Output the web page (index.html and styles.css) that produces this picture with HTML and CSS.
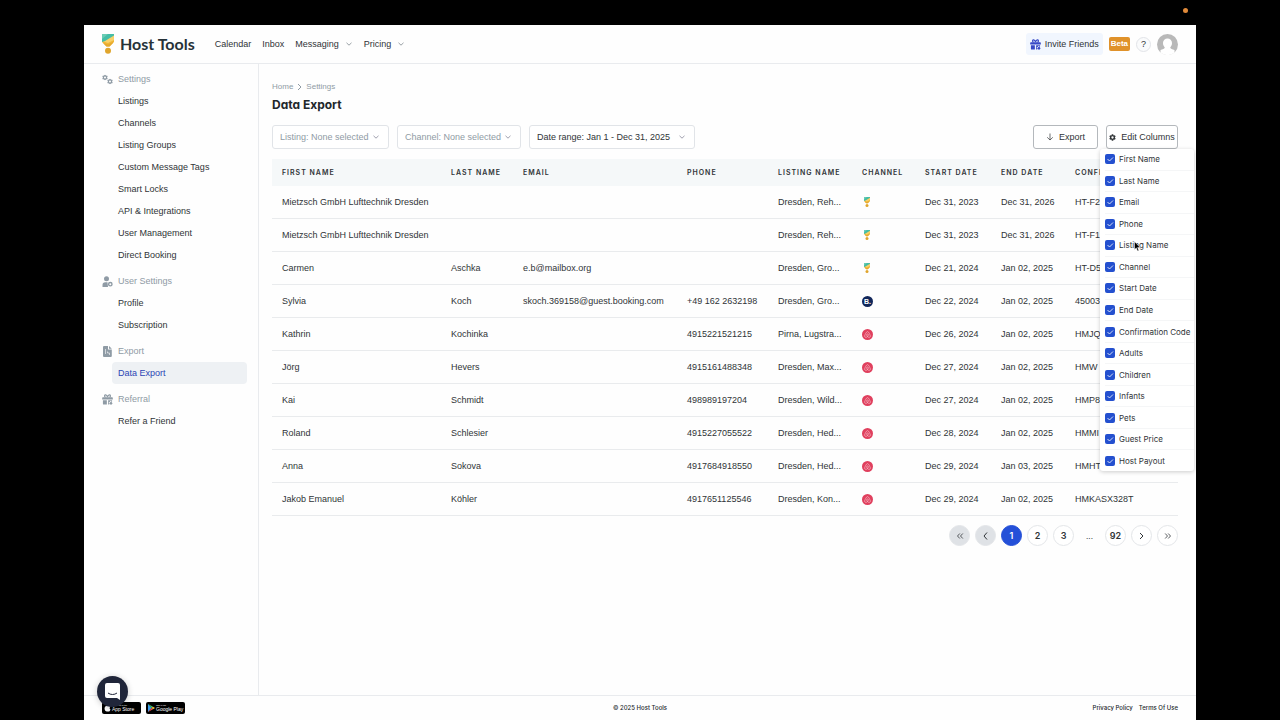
FILE: index.html
```html
<!DOCTYPE html>
<html lang="en">

<head>
    <meta charset="UTF-8">
    <title>Data Export - Host Tools</title>
    <link rel="stylesheet" href="styles.css">
</head>

<body>
    <svg class="sprite" aria-hidden="true">
        <symbol id="logo" viewBox="0 0 12 20">
            <path d="M0 0h12v8L7.500 12.500h-3L0 8z" fill="#f0b636"/>
            <path d="M12 1v5L6 9 0 7z" fill="#f8d06a"/>
            <path d="M0 0h12v1.500L3 7 0 8z" fill="#45bda6"/>
            <path d="M0 0h6L0 5z" fill="#6accb4"/>
            <path d="M1 9l5 1.500L11 8v1L7.500 12.500h-3z" fill="#e5a92f"/>
            <circle cx="6" cy="16.800" r="3" fill="#e0a52c"/>
        </symbol>
        <symbol id="down" viewBox="0 0 8 8">
            <path d="M1.500 2.800L4 5.200l2.500-2.400" fill="none" stroke="#7d868d" stroke-width=".8"/>
        </symbol>
        <symbol id="gear" viewBox="0 0 24 24">
            <path fill="currentColor" fill-rule="evenodd" d="M9.500 1h5l.7 3.200 2 1.200L20.300 4.400l2.500 4.300-2.400 2.200v2.200l2.400 2.200-2.500 4.300-3.100-1-2 1.200-.7 3.200h-5l-.7-3.200-2-1.200-3.100 1-2.500-4.300 2.400-2.200v-2.200L1.200 8.700l2.500-4.300 3.100 1 2-1.200zM12 8a4 4 0 1 0 0 8 4 4 0 0 0 0-8z"/>
        </symbol>
        <symbol id="gift" viewBox="0 0 12 12">
            <path fill="currentColor" d="M1 3.500h10a.8.8 0 0 1 .8.800v1.700H.2V4.300A.8.800 0 0 1 1 3.500zM1 6.800h4.300v4.700H2a1 1 0 0 1-1-1zM6.700 6.800H11v1.400l-1 .2-.8-1-.8 1.200-1.200.2.900 1-.2 1.700H6.700z"/>
            <circle cx="9.800" cy="10.200" r="1.400" fill="currentColor"/>
            <path d="M6 3.500C5.500 1.500 4.500.8 3.600 1c-1.200.3-1 2.200.4 2.500M6 3.500C6.500 1.500 7.500.8 8.400 1c1.200.3 1 2.200-.4 2.500" fill="none" stroke="currentColor" stroke-width="1.300"/>
        </symbol>
        <symbol id="airbnb" viewBox="0 0 10 10">
            <circle cx="5" cy="5" r="5" fill="#e0405e"/>
            <path d="M5 6.900C4 5.800 3.900 4.500 5 4.500s1 1.300 0 2.400zM5 6.900c-1 1.200-2.900.8-2.600-.6C2.700 5.200 4 2.300 5 2.300s2.300 2.900 2.600 4c.3 1.400-1.600 1.800-2.600.6z" fill="none" stroke="#fbd3da" stroke-width=".5"/>
        </symbol>
    </svg>
    <span class="rec-dot"></span>

    <div class="app">
        <header class="topbar">
            <a class="brand" href="#"><svg width="12" height="20"><use href="#logo"/></svg>Host Tools</a>
            <nav class="topnav">
                <a href="#">Calendar</a>
                <a href="#">Inbox</a>
                <a href="#">Messaging <svg width="8" height="8"><use href="#down"/></svg></a>
                <a href="#">Pricing <svg width="8" height="8"><use href="#down"/></svg></a>
            </nav>
            <div class="account">
                <a class="invite" href="#"><svg width="11" height="11"><use href="#gift"/></svg>Invite Friends</a>
                <span class="beta">Beta</span>
                <button class="help" aria-label="Help">?</button>
                <button class="avatar" aria-label="Account">
                    <svg width="21" height="21" viewBox="0 0 21 21">
                        <circle cx="10.500" cy="10.500" r="10.500" fill="#b9b9b9"/>
                        <path d="M10.500 4.500a4.500 4.500 0 0 1 4.500 4.500c0 2-.8 3.500-1.800 4.400 0 1.400 2.300 1.600 4.300 2.700v2.300a10.500 10.500 0 0 1-14 0v-2.300c2-1.100 4.300-1.300 4.300-2.700C6.800 12.500 6 11 6 9a4.500 4.500 0 0 1 4.500-4.500z" fill="#fff"/>
                    </svg>
                </button>
            </div>
        </header>

        <div class="layout">
            <aside class="sidebar">
                <h2>
                    <svg width="11" height="11" viewBox="0 0 22 22"><svg width="12" height="12" y="1"><use href="#gear"/></svg><svg width="12" height="12" x="10" y="9"><use href="#gear"/></svg></svg>
                    Settings
                </h2>
                <ul>
                    <li><a href="#">Listings</a></li>
                    <li><a href="#">Channels</a></li>
                    <li><a href="#">Listing Groups</a></li>
                    <li><a href="#">Custom Message Tags</a></li>
                    <li><a href="#">Smart Locks</a></li>
                    <li><a href="#">API &amp; Integrations</a></li>
                    <li><a href="#">User Management</a></li>
                    <li><a href="#">Direct Booking</a></li>
                </ul>
                <h2>
                    <svg width="11" height="11" viewBox="0 0 11 11"><circle cx="4.500" cy="2.800" r="2.500" fill="currentColor"/><path d="M.5 11V9a2.800 2.800 0 0 1 2.800-2.800h2.200L6 11z" fill="currentColor"/><circle cx="8.300" cy="8.200" r="1.700" fill="none" stroke="currentColor" stroke-width="1.400"/></svg>
                    User Settings
                </h2>
                <ul>
                    <li><a href="#">Profile</a></li>
                    <li><a href="#">Subscription</a></li>
                </ul>
                <h2>
                    <svg width="11" height="11" viewBox="0 0 11 11"><path d="M2 0h4v3.500h3.800V10a1 1 0 0 1-1 1H2a1 1 0 0 1-1-1V1a1 1 0 0 1 1-1zM7 0l2.800 2.800H7z" fill="currentColor"/><path d="M3.500 3v5M5.500 5.500v1.500h2V9" fill="none" stroke="#fff" stroke-width=".6"/></svg>
                    Export
                </h2>
                <ul>
                    <li><a class="active" href="#">Data Export</a></li>
                </ul>
                <h2><svg width="11" height="11"><use href="#gift"/></svg>Referral</h2>
                <ul>
                    <li><a href="#">Refer a Friend</a></li>
                </ul>
            </aside>

            <main>
                <nav class="crumbs">
                    <a href="#">Home</a>
                    <svg width="5" height="8" viewBox="0 0 5 8"><path d="M1 1l3 3-3 3" fill="none" stroke="currentColor"/></svg>
                    <a href="#">Settings</a>
                </nav>
                <h1>Data Export</h1>

                <div class="toolbar">
                    <select class="muted listing" aria-label="Listing"><option>Listing: None selected</option></select>
                    <select class="muted channel" aria-label="Channel"><option>Channel: None selected</option></select>
                    <select class="range" aria-label="Date range"><option>Date range: Jan 1 - Dec 31, 2025</option></select>
                    <button class="export">
                        <svg width="8" height="8" viewBox="0 0 8 8"><path d="M4 .5v6.500M1.200 4.300L4 7l2.800-2.700" fill="none" stroke="currentColor" stroke-width=".7"/></svg>
                        Export
                    </button>
                    <div class="columns">
                        <button><svg width="7" height="7"><use href="#gear"/></svg>Edit Columns</button>
                        <div class="menu">
                            <label><input type="checkbox" checked>First Name</label>
                            <label><input type="checkbox" checked>Last Name</label>
                            <label><input type="checkbox" checked>Email</label>
                            <label><input type="checkbox" checked>Phone</label>
                            <label><input type="checkbox" checked>Listing Name</label>
                            <label><input type="checkbox" checked>Channel</label>
                            <label><input type="checkbox" checked>Start Date</label>
                            <label><input type="checkbox" checked>End Date</label>
                            <label><input type="checkbox" checked>Confirmation Code</label>
                            <label><input type="checkbox" checked>Adults</label>
                            <label><input type="checkbox" checked>Children</label>
                            <label><input type="checkbox" checked>Infants</label>
                            <label><input type="checkbox" checked>Pets</label>
                            <label><input type="checkbox" checked>Guest Price</label>
                            <label><input type="checkbox" checked>Host Payout</label>
                        </div>
                    </div>
                </div>

                <table>
                    <colgroup>
                        <col class="w-first"><col class="w-last"><col class="w-email"><col class="w-phone"><col class="w-listing"><col class="w-channel"><col class="w-start"><col class="w-end"><col>
                    </colgroup>
                    <thead>
                        <tr><th>First Name</th><th>Last Name</th><th>Email</th><th>Phone</th><th>Listing Name</th><th>Channel</th><th>Start Date</th><th>End Date</th><th>Confi</th></tr>
                    </thead>
                    <tbody>
                        <tr><td>Mietzsch GmbH Lufttechnik Dresden</td><td></td><td></td><td></td><td>Dresden, Reh...</td><td><svg class="ht" width="6" height="10"><use href="#logo"/></svg></td><td>Dec 31, 2023</td><td>Dec 31, 2026</td><td>HT-F2</td></tr>
                        <tr><td>Mietzsch GmbH Lufttechnik Dresden</td><td></td><td></td><td></td><td>Dresden, Reh...</td><td><svg class="ht" width="6" height="10"><use href="#logo"/></svg></td><td>Dec 31, 2023</td><td>Dec 31, 2026</td><td>HT-F1</td></tr>
                        <tr><td>Carmen</td><td>Aschka</td><td>e.b@mailbox.org</td><td></td><td>Dresden, Gro...</td><td><svg class="ht" width="6" height="10"><use href="#logo"/></svg></td><td>Dec 21, 2024</td><td>Jan 02, 2025</td><td>HT-D5</td></tr>
                        <tr><td>Sylvia</td><td>Koch</td><td>skoch.369158@guest.booking.com</td><td>+49 162 2632198</td><td>Dresden, Gro...</td><td><span class="booking">B.</span></td><td>Dec 22, 2024</td><td>Jan 02, 2025</td><td>45003</td></tr>
                        <tr><td>Kathrin</td><td>Kochinka</td><td></td><td>4915221521215</td><td>Pirna, Lugstra...</td><td><svg width="11" height="11"><use href="#airbnb"/></svg></td><td>Dec 26, 2024</td><td>Jan 02, 2025</td><td>HMJQ</td></tr>
                        <tr><td>Jörg</td><td>Hevers</td><td></td><td>4915161488348</td><td>Dresden, Max...</td><td><svg width="11" height="11"><use href="#airbnb"/></svg></td><td>Dec 27, 2024</td><td>Jan 02, 2025</td><td>HMW</td></tr>
                        <tr><td>Kai</td><td>Schmidt</td><td></td><td>498989197204</td><td>Dresden, Wild...</td><td><svg width="11" height="11"><use href="#airbnb"/></svg></td><td>Dec 27, 2024</td><td>Jan 02, 2025</td><td>HMP8</td></tr>
                        <tr><td>Roland</td><td>Schlesier</td><td></td><td>4915227055522</td><td>Dresden, Hed...</td><td><svg width="11" height="11"><use href="#airbnb"/></svg></td><td>Dec 28, 2024</td><td>Jan 02, 2025</td><td>HMMI</td></tr>
                        <tr><td>Anna</td><td>Sokova</td><td></td><td>4917684918550</td><td>Dresden, Hed...</td><td><svg width="11" height="11"><use href="#airbnb"/></svg></td><td>Dec 29, 2024</td><td>Jan 03, 2025</td><td>HMHT</td></tr>
                        <tr><td>Jakob Emanuel</td><td>Köhler</td><td></td><td>4917651125546</td><td>Dresden, Kon...</td><td><svg width="11" height="11"><use href="#airbnb"/></svg></td><td>Dec 29, 2024</td><td>Jan 02, 2025</td><td>HMKASX328T</td></tr>
                    </tbody>
                </table>

                <nav class="pages" aria-label="Pages">
                    <button disabled aria-label="First"><svg width="8" height="8" viewBox="0 0 8 8"><path d="M3.800 1.500L1.500 4l2.300 2.500M6.800 1.500L4.500 4l2.300 2.500" fill="none" stroke="currentColor" stroke-width=".8"/></svg></button>
                    <button disabled aria-label="Previous"><svg width="5" height="8" viewBox="0 0 5 8"><path d="M4 .5L1 4l3 3.500" fill="none" stroke="currentColor"/></svg></button>
                    <button class="current">1</button>
                    <button>2</button>
                    <button>3</button>
                    <span>...</span>
                    <button>92</button>
                    <button aria-label="Next"><svg width="5" height="8" viewBox="0 0 5 8"><path d="M1 1l3 3-3 3" fill="none" stroke="currentColor"/></svg></button>
                    <button aria-label="Last"><svg width="8" height="8" viewBox="0 0 8 8"><path d="M1.200 1.500L3.500 4 1.200 6.500M4.200 1.500L6.500 4 4.200 6.500" fill="none" stroke="currentColor" stroke-width=".8"/></svg></button>
                </nav>
            </main>
        </div>

        <footer>
            <div class="stores">
                <a href="#">
                    <svg width="7" height="8" viewBox="0 0 7 9"><path d="M3.500 2.500C4.500 1.800 6 2 6.700 3c-1.200.8-1 2.500.2 3.200C6.300 8 5.300 9 3.600 8.300 2 9 .2 7.500.2 5c0-2.300 1.800-3.200 3.300-2.500zM3.500 2C3.500 1 4.200.2 5 0c.1 1-.6 1.900-1.500 2z" fill="#fff"/></svg>
                    <span><small>Download on the</small>App Store</span>
                </a>
                <a href="#">
                    <svg width="7" height="8" viewBox="0 0 7 8"><path d="M0 0v8l3.500-4z" fill="#3c9ef0"/><path d="M0 0l5 2.800L3.500 4z" fill="#3fc46f"/><path d="M5 2.800L7 4 5 5.200 3.500 4z" fill="#f8c73a"/><path d="M0 8l5-2.800L3.500 4z" fill="#e8504b"/></svg>
                    <span><small>GET IT ON</small>Google Play</span>
                </a>
            </div>
            <span>© 2025 Host Tools</span>
            <div class="legal"><a href="#">Privacy Policy</a><a href="#">Terms Of Use</a></div>
        </footer>
    </div>

    <button class="chat" aria-label="Open chat">
        <svg width="15" height="17" viewBox="0 0 15 17"><path d="M2 0h11a2 2 0 0 1 2 2v15l-3-2H2a2 2 0 0 1-2-2V2a2 2 0 0 1 2-2z" fill="#fff"/><path d="M3 10c2.500 2 6.500 2 9 0" fill="none" stroke="#20263a"/></svg>
    </button>
    <svg class="cursor" width="7" height="11" viewBox="0 0 7 11"><path d="M.5.5v8l1.800-1.600L3.500 10l1.400-.6-1.300-2.900h2.500z" fill="#000" stroke="#fff" stroke-width=".5"/></svg>
</body>

</html>
```
FILE: styles.css
```css
* {
    box-sizing: border-box;
}

body {
    margin: 0;
    padding: 25px 84px 0;
    min-height: 100vh;
    display: flex;
    background: #000;
    color: #303437;
    font-family: "Liberation Sans", Arial, sans-serif;
    font-size: 9px;
    line-height: 12px;
}

a {
    color: inherit;
    text-decoration: none;
}

svg {
    flex: none;
}

button,
select {
    font: inherit;
    color: inherit;
    background: #fff;
    cursor: pointer;
}

.sprite {
    position: absolute;
    width: 0;
    height: 0;
}

.rec-dot {
    position: absolute;
    top: 8px;
    right: 92px;
    width: 5px;
    height: 5px;
    border-radius: 50%;
    background: #e08a3a;
}

.app {
    flex: 1;
    min-width: 0;
    display: flex;
    flex-direction: column;
    background: #fefefe;
}

/* top bar */
.topbar {
    display: flex;
    align-items: center;
    height: 39px;
    padding: 0 18px;
    border-bottom: 1px solid #e9ebee;
}

.brand {
    display: flex;
    align-items: center;
    gap: 6px;
    font-family: Lato, sans-serif;
    font-size: 16px;
    font-weight: 700;
    color: #263238;
}

.topnav {
    display: flex;
    gap: 11px;
    margin-left: 20px;
}

.topnav a {
    display: flex;
    align-items: center;
    gap: 6px;
}

.account {
    display: flex;
    align-items: center;
    gap: 6px;
    margin-left: auto;
}

.invite {
    display: flex;
    align-items: center;
    gap: 4px;
    height: 22px;
    padding: 0 4px;
    border-radius: 3px;
    background: #f1f6fe;
}

.invite svg {
    color: #3949c6;
}

.beta {
    padding: 1px 2px;
    border-radius: 2px;
    background: #e0922a;
    color: #fff;
    font-size: 8px;
    font-weight: 700;
}

.help {
    width: 15px;
    height: 15px;
    padding: 0;
    border: 1px solid #e2e4e8;
    border-radius: 50%;
    background: #fafbfc;
}

.avatar {
    display: flex;
    padding: 0;
    border: 0;
    border-radius: 50%;
}

/* sidebar */
.layout {
    flex: 1;
    display: flex;
}

.sidebar {
    width: 175px;
    padding: 4px 11px 0 18px;
    border-right: 1px solid #e9ebee;
}

.sidebar h2 {
    display: flex;
    align-items: center;
    gap: 5px;
    height: 22px;
    margin: 0;
    font-size: 9px;
    font-weight: 400;
    color: #8f9ba5;
}

.sidebar ul {
    margin: 0 0 4px;
    padding: 0 0 0 10px;
    list-style: none;
}

.sidebar li a {
    display: block;
    padding: 5px 6px;
    border-radius: 4px;
}

.sidebar .active {
    background: #eef1f4;
    color: #2b45b5;
}

/* content */
main {
    flex: 1;
    min-width: 0;
    padding: 17px 18px 0 13px;
}

.crumbs {
    display: flex;
    align-items: center;
    gap: 4px;
    font-size: 8px;
    color: #8f9ba5;
}

h1 {
    margin: 4px 0 12px;
    font-family: Inter, sans-serif;
    font-size: 12px;
    line-height: 16px;
    font-weight: 700;
    color: #22272b;
    font-feature-settings: "cv11";
}

.toolbar {
    display: flex;
    gap: 8px;
    margin-bottom: 10px;
}

.toolbar select,
.toolbar button {
    height: 24px;
    border-radius: 3px;
}

.toolbar select {
    appearance: none;
    padding: 0 7px;
    border: 1px solid #e1e4e8;
    background: #fff url("data:image/svg+xml,%3Csvg xmlns='http://www.w3.org/2000/svg' width='8' height='8'%3E%3Cpath d='M1.500 2.800L4 5.200l2.500-2.400' fill='none' stroke='%23889' stroke-width='.8'/%3E%3C/svg%3E") no-repeat right 8px center;
}

.toolbar .muted {
    color: #8f9ba5;
}

.listing {
    width: 117px;
}

.channel {
    width: 124px;
}

.range {
    width: 166px;
}

.toolbar button {
    display: flex;
    align-items: center;
    justify-content: center;
    gap: 5px;
    padding: 0;
    border: 1px solid #b4b8bc;
    white-space: nowrap;
}

.export {
    width: 65px;
    margin-left: auto;
}

.columns {
    position: relative;
}

.columns button {
    width: 72px;
}

.menu {
    position: absolute;
    top: 24px;
    right: -16px;
    z-index: 2;
    display: flex;
    flex-direction: column;
    width: 94px;
    min-height: 322px;
    padding-left: 5px;
    border-radius: 3px;
    background: #fff;
    box-shadow: 0 1px 4px rgba(0, 0, 0, 0.2);
    font-family: Inter, sans-serif;
    font-size: 8px;
}

.menu label {
    flex: 1;
    display: flex;
    align-items: center;
    gap: 4px;
    border-bottom: 1px solid #f5f6f7;
    white-space: nowrap;
}

.menu label:last-child {
    border-bottom: 0;
}

.menu input {
    appearance: none;
    width: 10px;
    height: 10px;
    margin: 0;
    border-radius: 2px;
    background: #2450cf url("data:image/svg+xml,%3Csvg xmlns='http://www.w3.org/2000/svg' width='10' height='10'%3E%3Cpath d='M2.500 5l2 2 3.500-3.500' fill='none' stroke='white' stroke-width='.8'/%3E%3C/svg%3E");
}

table {
    width: 100%;
    table-layout: fixed;
    border-spacing: 0;
}

.w-first { width: 169px; }
.w-last { width: 72px; }
.w-email { width: 164px; }
.w-phone { width: 91px; }
.w-listing { width: 84px; }
.w-channel { width: 63px; }
.w-start { width: 76px; }
.w-end { width: 74px; }

th,
td {
    padding: 0 0 0 10px;
    text-align: left;
    white-space: nowrap;
}

th {
    height: 27px;
    background: #f5f8f9;
    font-family: Inter, sans-serif;
    font-size: 7px;
    font-weight: 600;
    letter-spacing: 1px;
    text-transform: uppercase;
}

td {
    height: 33px;
    border-bottom: 1px solid #e9ebed;
}

td svg,
.booking {
    display: block;
}

.ht {
    margin-left: 2px;
}

.booking {
    width: 11px;
    border-radius: 50%;
    background: #12275a;
    color: #fff;
    font-size: 7px;
    line-height: 11px;
    font-weight: 700;
    text-align: center;
}

.pages {
    display: flex;
    justify-content: flex-end;
    gap: 5px;
    margin-top: 9px;
}

.pages button,
.pages span {
    display: flex;
    align-items: center;
    justify-content: center;
    width: 21px;
    height: 21px;
    padding: 0;
    border: 1px solid #e4e6e9;
    border-radius: 50%;
    font-family: Inter, sans-serif;
    font-weight: 600;
}

.pages span {
    border: 0;
    font-size: 8px;
    font-weight: 400;
}

.pages button:disabled {
    background: #dfe2e6;
}

.pages .current {
    border-color: #2450d8;
    background: #2450d8;
    color: #fff;
}

/* footer */
footer {
    display: grid;
    grid-template-columns: 1fr auto 1fr;
    align-items: center;
    height: 25px;
    padding: 0 18px;
    border-top: 1px solid #e9ebee;
    font-family: Inter, sans-serif;
    font-size: 6px;
    font-weight: 500;
    color: #22272b;
}

.stores {
    display: flex;
    gap: 5px;
}

.stores a {
    display: flex;
    align-items: center;
    gap: 1px;
    width: 39px;
    height: 12px;
    padding-left: 2px;
    border-radius: 2px;
    background: #000;
    color: #fff;
    font-family: "Liberation Sans", Arial, sans-serif;
    font-size: 5px;
    line-height: 5px;
    font-weight: 400;
    white-space: nowrap;
}

.stores small {
    display: block;
    font-size: 2px;
    line-height: 3px;
}

.legal {
    display: flex;
    justify-content: flex-end;
    gap: 6px;
}

.chat {
    position: fixed;
    left: 97px;
    bottom: 13px;
    display: flex;
    align-items: center;
    justify-content: center;
    width: 31px;
    height: 31px;
    padding: 0;
    border: 0;
    border-radius: 50%;
    background: #20263a;
    box-shadow: 0 1px 6px rgba(0, 0, 0, 0.2);
}

.cursor {
    position: absolute;
    top: 241px;
    right: 139px;
    z-index: 3;
}
```
